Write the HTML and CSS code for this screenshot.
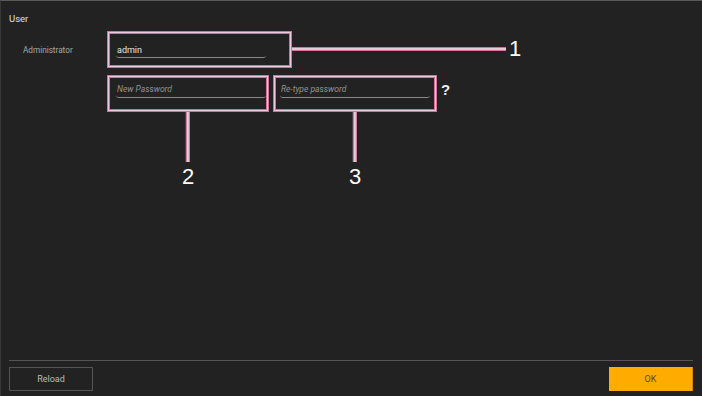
FILE: index.html
```html
<!DOCTYPE html>
<html lang="en">
<head>
    <meta charset="UTF-8">
    <meta name="viewport" content="width=device-width, initial-scale=1.0">
    <title>User</title>
    <link rel="stylesheet" href="styles.css">
</head>
<body>
    <div class="page">
        <div class="title">User</div>

        <div class="form">
            <div class="row">
                <label class="label" for="admin">Administrator</label>
                <div class="field">
                    <input class="text-input" type="text" id="admin" value="admin">
                    <div class="callout callout-1">
                        <div class="leader leader-right">
                            <span class="leader-line"></span>
                            <span class="leader-num">1</span>
                        </div>
                    </div>
                </div>
            </div>

            <div class="row row-passwords">
                <div class="field">
                    <input class="text-input" type="password" placeholder="New Password">
                    <div class="callout callout-2">
                        <div class="leader leader-down">
                            <span class="leader-line"></span>
                            <span class="leader-num">2</span>
                        </div>
                    </div>
                </div>
                <div class="field">
                    <input class="text-input" type="password" placeholder="Re-type password">
                    <div class="callout callout-3">
                        <div class="leader leader-down">
                            <span class="leader-line"></span>
                            <span class="leader-num">3</span>
                        </div>
                    </div>
                </div>
                <span class="help">?</span>
            </div>
        </div>

        <div class="spacer"></div>

        <div class="footer">
            <button class="btn">Reload</button>
            <button class="btn btn-ok">OK</button>
        </div>
    </div>
</body>
</html>
```

FILE: styles.css
```css
body {
    margin: 0;
    background-color: #222222;
    font-family: 'Roboto', 'Noto Sans', sans-serif;
    color: #dddddd;
}
.page {
    box-sizing: border-box;
    height: 396px;
    border-top: 1px solid #5a5a5a;
    border-left: 1px solid #383838;
    padding: 12px 9px 0 8px;
    display: flex;
    flex-direction: column;
}
.title {
    font-size: 9.5px;
    line-height: 12px;
    color: #e0e0e0;
}
.form {
    padding-left: 14px;
}
.row {
    display: flex;
    align-items: center;
    margin-top: 17px;
}
.row-passwords {
    margin-top: 23px;
    padding-left: 93px;
    gap: 14px;
}
.label {
    width: 93px;
    font-size: 8.2px;
    color: #a8a8a8;
}
.field {
    position: relative;
    width: 150px;
    height: 16px;
}
.text-input {
    display: block;
    box-sizing: border-box;
    width: 100%;
    height: 16px;
    padding: 0 0 0 1px;
    margin: 0;
    background: transparent;
    border: none;
    border-bottom: 1px solid #8a8a8a;
    border-radius: 3px;
    font-family: 'Roboto', sans-serif;
    font-size: 9px;
    color: #e6e6e6;
    outline: none;
}
.text-input::placeholder {
    font-size: 8.5px;
    font-style: italic;
    color: #939393;
}
.help {
    margin-left: -3px;
    font-family: 'Liberation Sans', Arial, sans-serif;
    font-weight: bold;
    font-size: 15px;
    color: #eeeeee;
}

/* annotation frames */
.callout {
    position: absolute;
    pointer-events: none;
    box-shadow: 0 0 0 1px #d0719f, 0 0 0 2px #efc8da, 0 0 0 3px #d0719f;
}
.callout-1 {
    top: -8px;
    bottom: -7px;
    left: -6px;
    right: -23px;
}
.callout-2 {
    top: -4px;
    bottom: -11px;
    left: -6px;
    right: 0;
}
.callout-3 {
    top: -4px;
    bottom: -11px;
    left: -4px;
    right: -4px;
}
.leader {
    position: absolute;
    display: flex;
    align-items: center;
}
.leader-right {
    left: calc(100% + 3px);
    top: 4px;
    height: 22px;
}
.leader-right .leader-line {
    width: 214px;
    height: 2px;
    border-top: 1px solid #d0719f;
    border-bottom: 1px solid #d0719f;
    background: #dccfd6;
}
.leader-down {
    top: calc(100% + 3px);
    left: 50%;
    transform: translateX(-50%);
    flex-direction: column;
}
.leader-down .leader-line {
    width: 2px;
    height: 50px;
    border-left: 1px solid #d0719f;
    border-right: 1px solid #d0719f;
    background: #dccfd6;
}
.leader-num {
    font-family: 'Liberation Sans', Arial, sans-serif;
    font-size: 22px;
    line-height: 22px;
    color: #ffffff;
}
.leader-right .leader-num {
    margin-left: 3px;
}
.leader-down .leader-num {
    margin-top: 4px;
}

.spacer {
    flex: 1;
}
.footer {
    display: flex;
    justify-content: space-between;
    border-top: 1px solid #555555;
    padding: 6px 0 5px;
}
.btn {
    box-sizing: border-box;
    width: 84px;
    height: 24px;
    background: transparent;
    border: 1px solid #555555;
    font-family: 'Roboto', sans-serif;
    font-size: 9px;
    color: #bbbbbb;
    cursor: pointer;
}
.btn-ok {
    background-color: #ffab00;
    border: none;
    border-right: 1px solid #d08a00;
    color: #5e4a1c;
}
```
